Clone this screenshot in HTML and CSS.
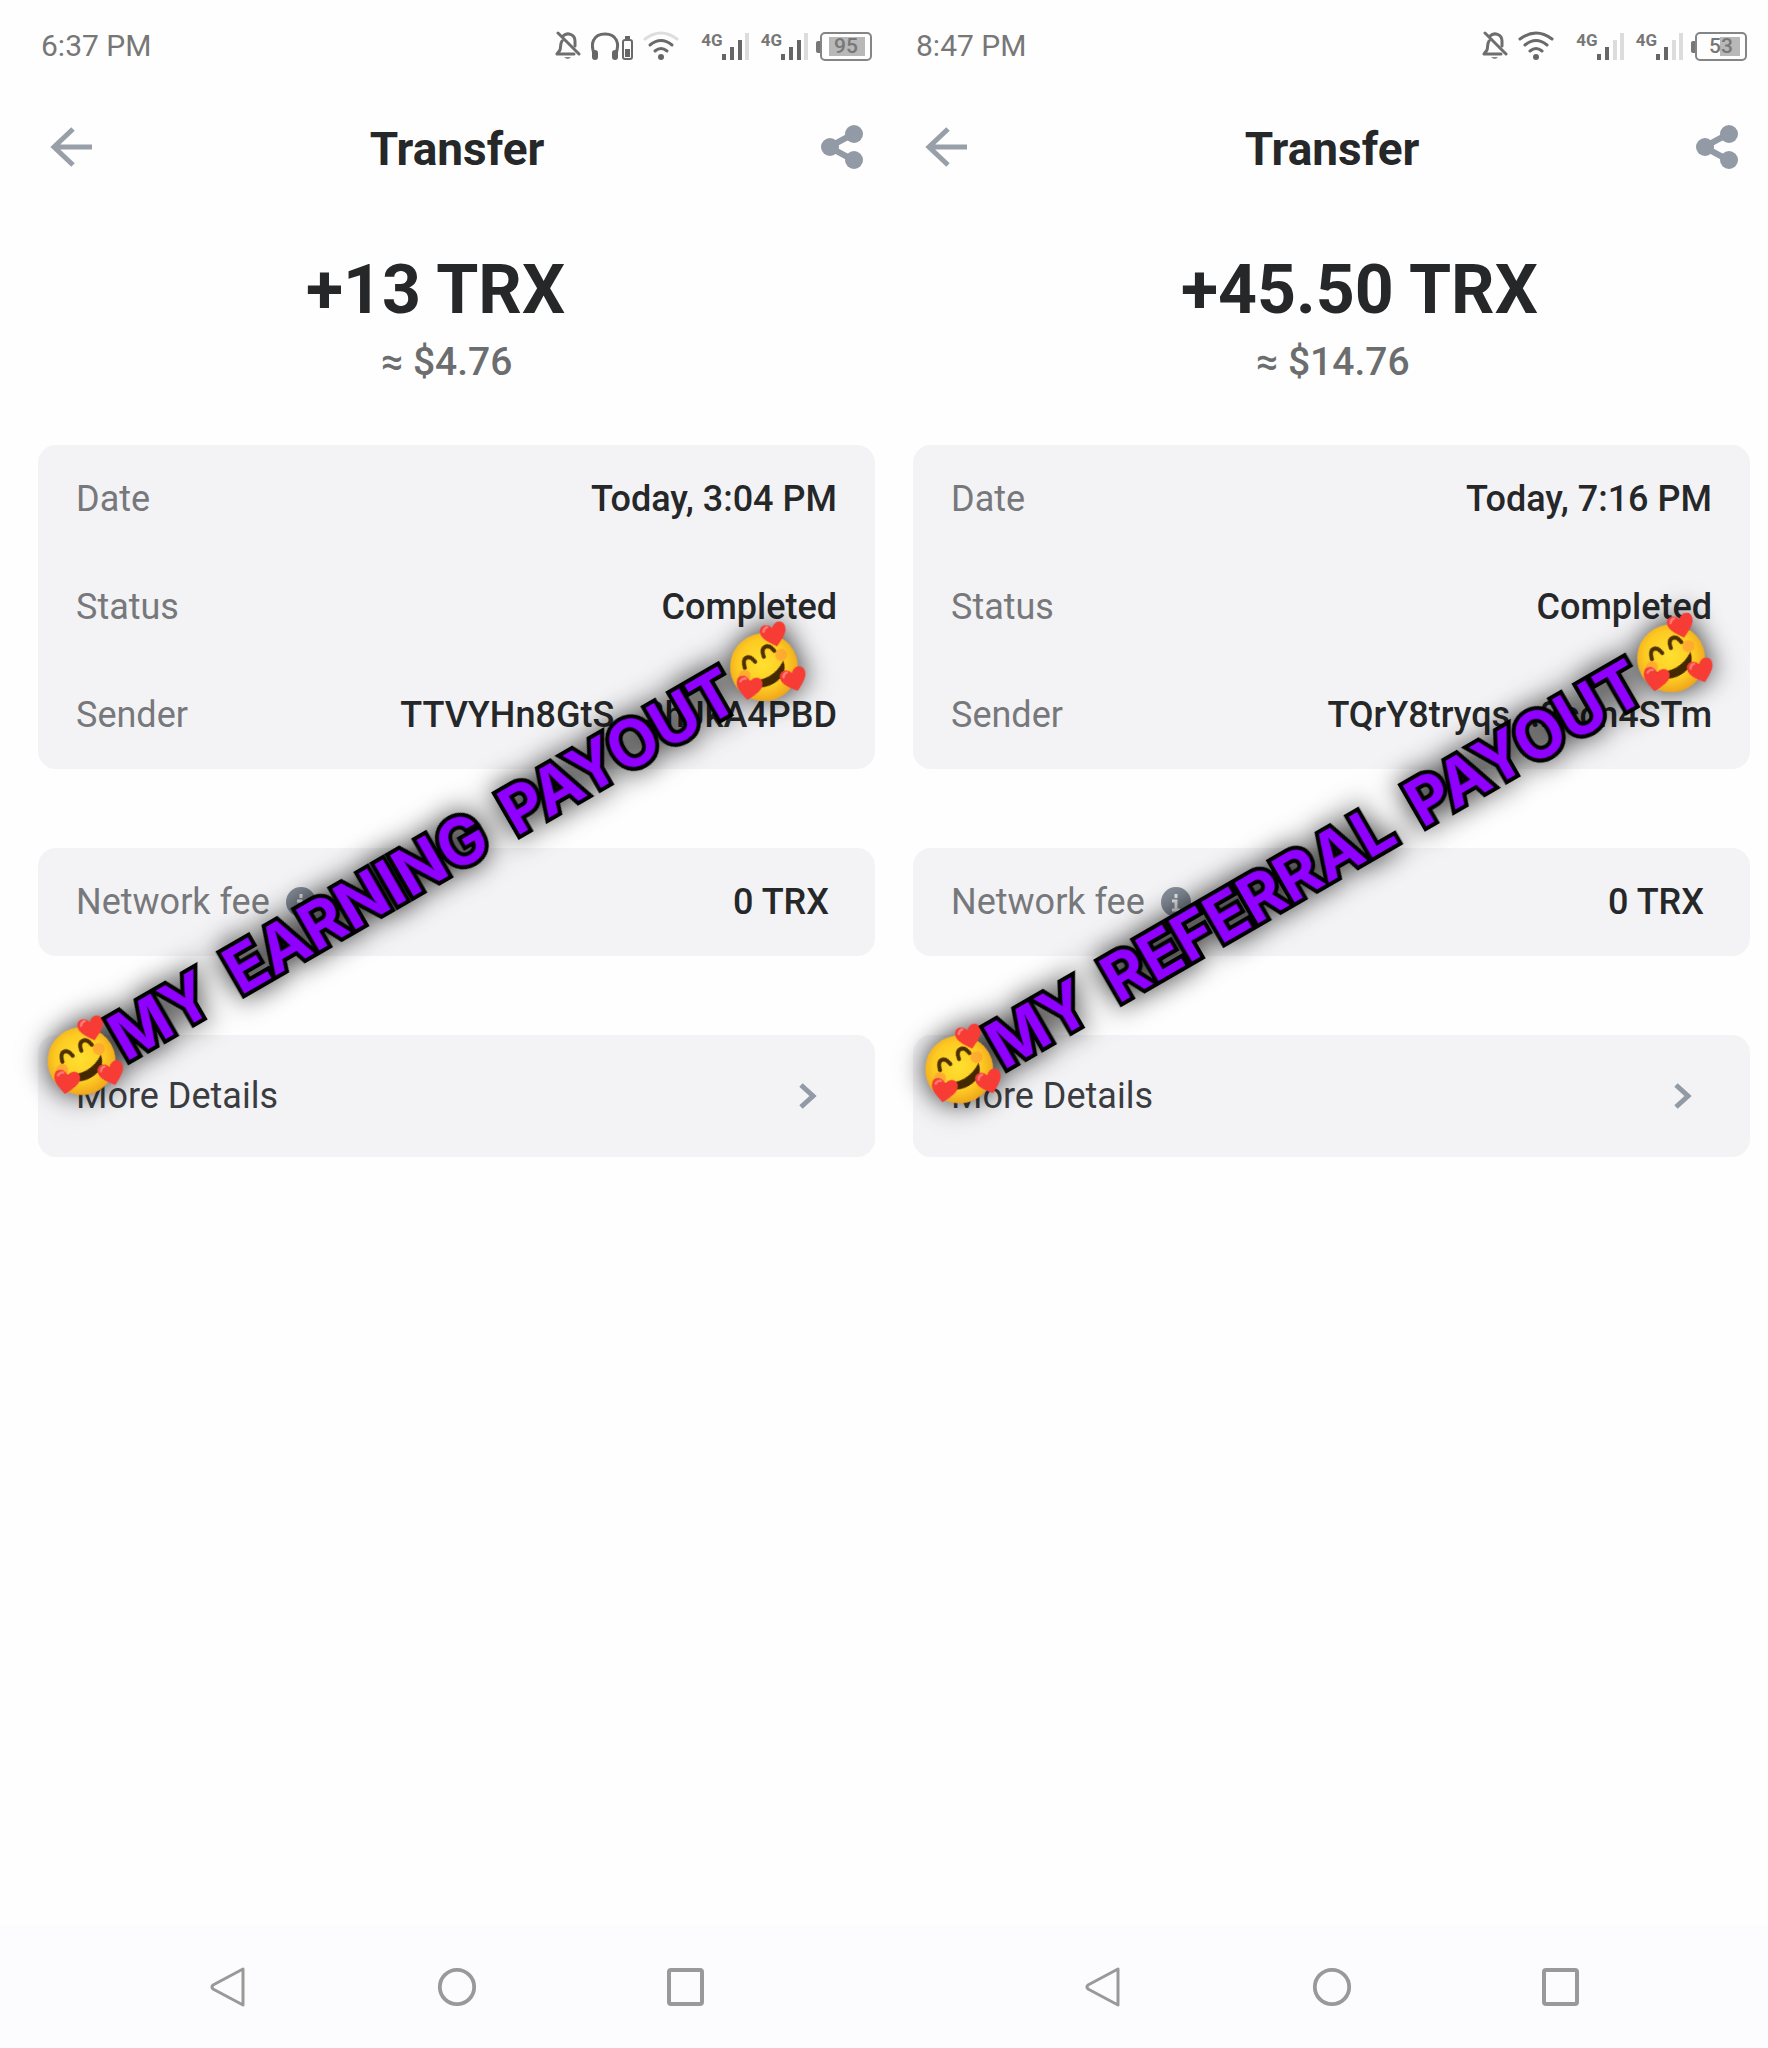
FILE: index.html
```html
<!DOCTYPE html>
<html lang="en">
<head>
<meta charset="utf-8">
<meta name="viewport" content="width=device-width, initial-scale=1">
<title>Transfer</title>
<link rel="stylesheet" href="styles.css">
</head>
<body>
<svg class="sprite" aria-hidden="true">
  <symbol id="bell" viewBox="0 0 26 30">
    <g fill="none" stroke="#6e6e6e" stroke-width="3" stroke-linecap="round" stroke-linejoin="round">
      <path d="M3 2 24 23M7 10C5 13 6 16 5 19L2 23H19"/>
      <path d="M8 5C12 1 20 3 20 10V15"/>
    </g>
    <path d="M9 26h7q-3 4-7 0z" fill="#8a8a8a"/>
  </symbol>
  <symbol id="headphones" viewBox="0 0 42 30">
    <path d="M4 25C-2 12 3 3 14 3S30 12 24 25" fill="none" stroke="#6a6a6a" stroke-width="3"/>
    <rect x="1" y="19" width="6" height="10" rx="3" fill="#666"/><rect x="21" y="19" width="6" height="10" rx="3" fill="#666"/>
    <rect x="32" y="9" width="9" height="19" rx="2" fill="none" stroke="#6a6a6a" stroke-width="2"/>
    <path d="M34 5h5v3h-5zM34 18h5v8h-5z" fill="#666"/>
  </symbol>
  <symbol id="wifi-weak" viewBox="0 0 36 30">
    <g fill="none" stroke-width="3" stroke-linecap="round">
      <path d="M2 8Q18-4 34 8" stroke="#dedede"/>
      <path d="M7 14Q18 5 29 14M12 20Q18 15 24 20" stroke="#6a6a6a"/>
    </g>
    <circle cx="18" cy="26" r="3" fill="#666"/>
  </symbol>
  <symbol id="wifi" viewBox="0 0 36 30">
    <path d="M2 8Q18-4 34 8M7 14Q18 5 29 14M12 20Q18 15 24 20" fill="none" stroke="#6a6a6a" stroke-width="3" stroke-linecap="round"/>
    <circle cx="18" cy="26" r="3" fill="#666"/>
  </symbol>
  <symbol id="bars-3" viewBox="0 0 28 28">
    <path d="M1 22h4v6H1zM9 15h4v13H9zM17 8h4v20h-4z" fill="#666"/><path d="M24 1h4v27h-4z" fill="#dcdcdc"/>
  </symbol>
  <symbol id="bars-2" viewBox="0 0 28 28">
    <path d="M1 22h4v6H1zM9 15h4v13H9z" fill="#666"/><path d="M17 8h4v20h-4zM24 1h4v27h-4z" fill="#dcdcdc"/>
  </symbol>
  <symbol id="back" viewBox="0 0 44 42">
    <path d="M23 3 4 21 23 39M4 21H42" fill="none" stroke="#989fa9" stroke-width="5"/>
  </symbol>
  <symbol id="share" viewBox="0 0 44 46">
    <path d="M35 9 9 23 35 37" fill="none" stroke="#929aa5" stroke-width="6"/>
    <g fill="#929aa5"><circle cx="34" cy="10" r="9"/><circle cx="10" cy="23" r="9"/><circle cx="34" cy="36" r="9"/></g>
  </symbol>
  <symbol id="info" viewBox="0 0 30 30">
    <circle cx="15" cy="15" r="15" fill="#858e9a"/>
    <path d="M15 7v4M11 14h4v9M11 23h8" fill="none" stroke="#f3f3f5" stroke-width="3"/>
  </symbol>
  <symbol id="chevron" viewBox="0 0 20 28">
    <path d="M3 3 15 14 3 25" fill="none" stroke="#929aa5" stroke-width="5"/>
  </symbol>
  <symbol id="nav-back" viewBox="0 0 40 44">
    <path d="M35 4V40L5 24Q3 22 5 20Z" fill="none" stroke="#999" stroke-width="3" stroke-linejoin="round"/>
  </symbol>
  <symbol id="nav-home" viewBox="0 0 44 44">
    <circle cx="22" cy="22" r="18" fill="none" stroke="#999" stroke-width="4"/>
  </symbol>
  <symbol id="nav-recent" viewBox="0 0 40 44">
    <rect x="3" y="5" width="33" height="34" rx="2" fill="none" stroke="#999" stroke-width="4"/>
  </symbol>
  <radialGradient id="skin" cx="50%" cy="45%" r="55%">
    <stop offset="0" stop-color="#ffe030"/><stop offset=".65" stop-color="#fdcb22"/><stop offset="1" stop-color="#f0a41c"/>
  </radialGradient>
  <symbol id="heart" viewBox="-12 -12 24 24">
    <path d="M0 11C-7 5-12 1-11-5-10-10-3-11 0-5 3-11 10-10 11-5 12 1 7 5 0 11Z" fill="#f73b35"/>
    <path d="M-8-4Q-7-7-4-7" fill="none" stroke="#ff8078" stroke-width="2" stroke-linecap="round"/>
  </symbol>
  <symbol id="face" viewBox="-38 -38 76 76" overflow="visible">
    <circle r="34" fill="url(#skin)"/>
    <circle cx="-21" cy="-2" r="6" fill="#ff8a3c" opacity=".5"/><circle cx="21" cy="-2" r="6" fill="#ff8a3c" opacity=".5"/>
    <path d="M-17-9Q-15-17-11-17-6-17-5-9M5-9Q6-17 11-17 16-17 17-9" fill="none" stroke="#4d2f00" stroke-width="4" stroke-linecap="round"/>
    <path d="M-20 4Q0 17 20 4 17 19 0 19-17 19-20 4Z" fill="#432800"/>
    <use href="#heart" x="-14" y="-14" width="28" height="28" transform="translate(25 -24) rotate(15)"/>
    <use href="#heart" x="-14" y="-14" width="28" height="28" transform="translate(20 25) rotate(12)"/>
    <use href="#heart" x="-14" y="-14" width="28" height="28" transform="translate(-23 10) rotate(38)"/>
  </symbol>
</svg>

<main class="board">
  <section class="screen">
    <div class="status">
      <span class="status__time">6:37 PM</span>
      <div class="status__icons">
        <svg class="i-bell"><use href="#bell"/></svg>
        <svg class="i-headphones"><use href="#headphones"/></svg>
        <svg class="i-wifi"><use href="#wifi-weak"/></svg>
        <div class="signals">
          <span class="signal">4G<svg class="i-bars"><use href="#bars-3"/></svg></span>
          <span class="signal">4G<svg class="i-bars"><use href="#bars-3"/></svg></span>
          <span class="battery"><span class="battery__level battery__level--95">95</span></span>
        </div>
      </div>
    </div>
    <header class="header">
      <button class="icon-button" type="button" aria-label="Back"><svg class="i-back"><use href="#back"/></svg></button>
      <h1 class="header__title">Transfer</h1>
      <button class="icon-button" type="button" aria-label="Share"><svg class="i-share"><use href="#share"/></svg></button>
    </header>
    <div class="summary">
      <p class="summary__amount">+13 TRX</p>
      <p class="summary__value">≈ $4.76</p>
    </div>
    <div class="cards">
      <dl class="card">
        <div class="row"><dt>Date</dt><dd>Today, 3:04 PM</dd></div>
        <div class="row"><dt>Status</dt><dd>Completed</dd></div>
        <div class="row"><dt>Sender</dt><dd>TTVYHn8GtS...3hJkA4PBD</dd></div>
      </dl>
      <dl class="card">
        <div class="row row--fee"><dt>Network fee<svg class="i-info"><use href="#info"/></svg></dt><dd>0 TRX</dd></div>
      </dl>
      <button class="card more" type="button">More Details<svg class="i-chevron"><use href="#chevron"/></svg></button>
      <div class="banner">
        <svg class="i-face"><use href="#face"/></svg>
        <p class="banner__text"><span>MY</span> <span>EARNING</span> <span>PAYOUT</span></p>
        <svg class="i-face"><use href="#face"/></svg>
      </div>
    </div>
    <nav class="nav">
      <button class="icon-button" type="button" aria-label="System back"><svg class="i-nav"><use href="#nav-back"/></svg></button>
      <button class="icon-button" type="button" aria-label="Home"><svg class="i-nav"><use href="#nav-home"/></svg></button>
      <button class="icon-button" type="button" aria-label="Recent apps"><svg class="i-nav"><use href="#nav-recent"/></svg></button>
    </nav>
  </section>

  <section class="screen">
    <div class="status">
      <span class="status__time">8:47 PM</span>
      <div class="status__icons">
        <svg class="i-bell"><use href="#bell"/></svg>
        <svg class="i-wifi"><use href="#wifi"/></svg>
        <div class="signals">
          <span class="signal">4G<svg class="i-bars"><use href="#bars-2"/></svg></span>
          <span class="signal">4G<svg class="i-bars"><use href="#bars-2"/></svg></span>
          <span class="battery"><span class="battery__level battery__level--53">53</span></span>
        </div>
      </div>
    </div>
    <header class="header">
      <button class="icon-button" type="button" aria-label="Back"><svg class="i-back"><use href="#back"/></svg></button>
      <h1 class="header__title">Transfer</h1>
      <button class="icon-button" type="button" aria-label="Share"><svg class="i-share"><use href="#share"/></svg></button>
    </header>
    <div class="summary">
      <p class="summary__amount">+45.50 TRX</p>
      <p class="summary__value">≈ $14.76</p>
    </div>
    <div class="cards">
      <dl class="card">
        <div class="row"><dt>Date</dt><dd>Today, 7:16 PM</dd></div>
        <div class="row"><dt>Status</dt><dd>Completed</dd></div>
        <div class="row"><dt>Sender</dt><dd>TQrY8tryqs...2ccn4STm</dd></div>
      </dl>
      <dl class="card">
        <div class="row row--fee"><dt>Network fee<svg class="i-info"><use href="#info"/></svg></dt><dd>0 TRX</dd></div>
      </dl>
      <button class="card more" type="button">More Details<svg class="i-chevron"><use href="#chevron"/></svg></button>
      <div class="banner banner--referral">
        <svg class="i-face"><use href="#face"/></svg>
        <p class="banner__text"><span>MY</span> <span>REFERRAL</span> <span>PAYOUT</span></p>
        <svg class="i-face"><use href="#face"/></svg>
      </div>
    </div>
    <nav class="nav">
      <button class="icon-button" type="button" aria-label="System back"><svg class="i-nav"><use href="#nav-back"/></svg></button>
      <button class="icon-button" type="button" aria-label="Home"><svg class="i-nav"><use href="#nav-home"/></svg></button>
      <button class="icon-button" type="button" aria-label="Recent apps"><svg class="i-nav"><use href="#nav-recent"/></svg></button>
    </nav>
  </section>
</main>
</body>
</html>
```
FILE: styles.css
```css
* { box-sizing: border-box; }
body, h1, p, dl, dd { margin: 0; }
body {
  background: linear-gradient(to top, #fcfcfe 123px, #fefefe 123px);
  color: #262729;
  font-family: Roboto, "Noto Sans", sans-serif;
}
svg { display: block; flex: none; }
.sprite { position: absolute; width: 0; height: 0; }

.board {
  display: grid;
  grid-template-columns: 1fr 1fr;
  min-height: 100vh;
  padding-right: 18px;
}
.screen {
  display: flex;
  flex-direction: column;
  min-width: 0;
  padding-left: 38px;
}

.status {
  display: flex;
  justify-content: space-between;
  align-items: center;
  height: 92px;
  padding: 0 3px;
  color: #777;
}
.status__time { font-size: 30px; line-height: 36px; }
.status__icons { display: flex; align-items: center; gap: 10px; }
.signals { display: flex; align-items: center; gap: 12px; padding-left: 12px; }
.signal { display: flex; align-items: flex-start; font-size: 17px; font-weight: 700; line-height: 16px; }
.battery {
  position: relative;
  width: 52px;
  height: 29px;
  padding: 3px 5px;
  border: 2px solid #858585;
  border-radius: 5px;
}
.battery::before {
  content: "";
  position: absolute;
  left: -6px;
  top: 7px;
  width: 4px;
  height: 12px;
  border-radius: 2px 0 0 2px;
  background: #777;
}
.battery__level {
  display: block;
  font-size: 21px;
  font-weight: 500;
  line-height: 19px;
  text-align: center;
}
.battery__level--95 { background: linear-gradient(to left, #b8b8b8 95%, transparent 95%); }
.battery__level--53 { background: linear-gradient(to left, #b8b8b8 53%, transparent 53%); }
.i-bell { width: 26px; height: 30px; }
.i-headphones { width: 42px; height: 30px; }
.i-wifi { width: 36px; height: 30px; }
.i-bars { width: 28px; height: 28px; margin-left: -2px; }

.icon-button {
  display: flex;
  padding: 0;
  border: 0;
  background: none;
  cursor: pointer;
}
.header {
  display: flex;
  justify-content: space-between;
  align-items: center;
  height: 110px;
  padding: 0 11px 0 12px;
}
.header__title { padding-top: 4px; font-size: 46px; font-weight: 700; line-height: 52px; }
.i-back { width: 44px; height: 42px; }
.i-share { width: 44px; height: 46px; }

.summary { padding: 48px 0 57px 268px; }
.summary__amount { font-size: 68px; font-weight: 700; line-height: 80px; }
.summary__value {
  padding: 6px 0 0 75px;
  color: #6c6d6f;
  font-size: 39px;
  font-weight: 500;
  line-height: 52px;
}

.cards { position: relative; display: flex; flex-direction: column; gap: 79px; }
.card {
  border: 0;
  border-radius: 18px;
  background: #f3f3f5;
  font-size: 36px;
}
.row {
  display: flex;
  justify-content: space-between;
  align-items: center;
  height: 108px;
  padding: 0 38px;
}
.row dt { display: flex; align-items: center; gap: 16px; color: #77787b; }
.row dd { font-weight: 500; }
.row--fee { padding-right: 46px; }
.more {
  display: flex;
  justify-content: space-between;
  align-items: center;
  height: 122px;
  padding: 0 57px 0 38px;
  color: #3b3c3f;
  font-family: inherit;
  text-align: left;
  cursor: pointer;
}
.i-info { width: 30px; height: 30px; }
.i-chevron { width: 20px; height: 28px; }

.banner {
  position: absolute;
  left: 46%;
  top: 419px;
  display: flex;
  align-items: center;
  transform: translate(-50%, -50%) rotate(-30deg);
  filter: drop-shadow(0 0 14px rgba(0, 0, 0, .8));
  pointer-events: none;
}
.banner--referral { left: 48%; }
.banner__text {
  display: flex;
  gap: 26px;
  color: #9000ff;
  font-family: Inter, sans-serif;
  font-size: 64px;
  font-weight: 700;
  line-height: 76px;
  white-space: nowrap;
  -webkit-text-stroke: 8px #000;
  paint-order: stroke fill;
}
.i-face { width: 76px; height: 76px; overflow: visible; }

.nav {
  display: flex;
  justify-content: center;
  align-items: center;
  gap: 187px;
  height: 123px;
  margin-top: auto;
}
.i-nav { width: 42px; height: 44px; }
```
